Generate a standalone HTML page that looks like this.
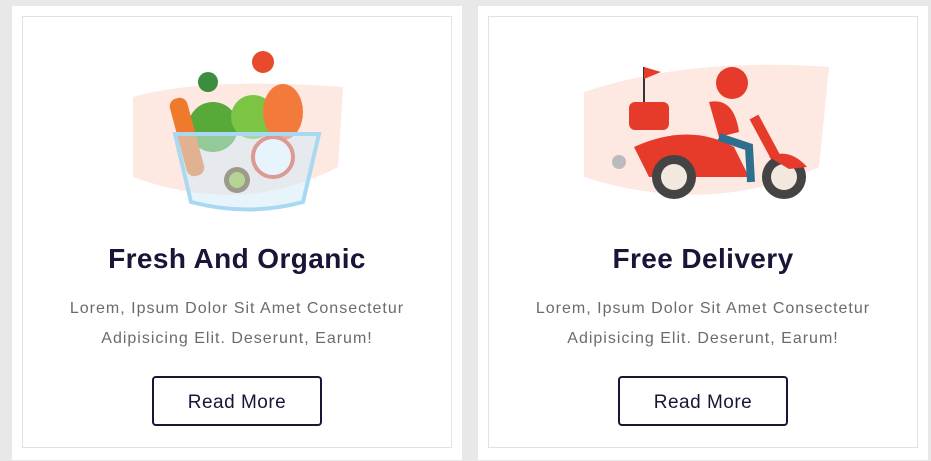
<!DOCTYPE html>
<html><head><style>
body{margin:0;width:931px;height:461px;background:#e8e8e8;overflow:hidden;font-family:"Liberation Sans",sans-serif}
.card{position:absolute;top:6px;width:450px;height:454px;background:#fff}
.in{position:absolute;left:10px;top:10px;width:428px;height:430px;border:1px solid #e2e2e2;text-align:center}
h2{position:absolute;top:226px;left:0;right:0;margin:0;font-size:28px;letter-spacing:0.4px;color:#1b1437;font-weight:bold}
p{position:absolute;top:277px;left:0;right:0;margin:0;font-size:16px;letter-spacing:1px;line-height:30px;color:#6b6b6b}
.btn{position:absolute;left:129px;top:359px;width:166px;height:46px;border:2px solid #1b1437;border-radius:4px;font-size:19px;letter-spacing:0.5px;line-height:50px;color:#1b1437}
svg{position:absolute;left:0;top:0}
</style></head><body>
<div class="card" style="left:12px"><div class="in">
<svg width="428" height="210">
<path d="M110 80 Q180 60 320 70 L315 150 Q220 200 110 160 Z" fill="#fde8e2"/>
<circle cx="190" cy="110" r="25" fill="#58a83a"/><circle cx="230" cy="100" r="22" fill="#7cc444"/>
<rect x="155" y="80" width="18" height="80" rx="8" fill="#f07a2c" transform="rotate(-15 164 120)"/>
<ellipse cx="260" cy="95" rx="20" ry="28" fill="#f37a3b"/>
<circle cx="240" cy="45" r="11" fill="#e84a2e"/><circle cx="185" cy="65" r="10" fill="#3c8d3e"/>
<circle cx="250" cy="140" r="20" fill="#fff" stroke="#e84a2e" stroke-width="4"/>
<circle cx="214" cy="163" r="13" fill="#6b4a1f"/><circle cx="214" cy="163" r="8" fill="#9bbf2e"/>
<path d="M152 117 L296 117 L280 185 Q225 200 168 185 Z" fill="#cfeaf8" fill-opacity=".5" stroke="#a9d8f2" stroke-width="4"/>
</svg>
<h2>Fresh And Organic</h2>
<p>Lorem, Ipsum Dolor Sit Amet Consectetur<br>Adipisicing Elit. Deserunt, Earum!</p>
<div class="btn">Read More</div>
</div></div>
<div class="card" style="left:478px"><div class="in">
<svg width="428" height="210">
<path d="M95 75 Q200 40 340 50 L330 150 Q220 200 95 160 Z" fill="#fde8e2"/>
<circle cx="130" cy="145" r="7" fill="#bbb"/>
<rect x="140" y="85" width="40" height="28" rx="6" fill="#e63b2a"/>
<path d="M155 50 L155 85" stroke="#333" stroke-width="2"/><path d="M155 50 L172 55 L155 62Z" fill="#e63b2a"/>
<path d="M145 130 Q200 105 245 130 L260 160 L160 160Z" fill="#e63b2a"/>
<circle cx="243" cy="66" r="16" fill="#e63b2a"/>
<path d="M220 85 Q245 80 250 115 L230 120Z" fill="#e63b2a"/>
<path d="M230 120 L260 130 L262 165" stroke="#2e6e8e" stroke-width="8" fill="none"/>
<path d="M265 100 L300 165" stroke="#e63b2a" stroke-width="10"/>
<circle cx="185" cy="160" r="22" fill="#444"/><circle cx="185" cy="160" r="13" fill="#f3e8dd"/>
<circle cx="295" cy="160" r="22" fill="#444"/><circle cx="295" cy="160" r="13" fill="#f3e8dd"/>
<path d="M280 140 Q300 130 318 150 L300 152Z" fill="#e63b2a"/>
</svg>
<h2>Free Delivery</h2>
<p>Lorem, Ipsum Dolor Sit Amet Consectetur<br>Adipisicing Elit. Deserunt, Earum!</p>
<div class="btn">Read More</div>
</div></div>
</body></html>
